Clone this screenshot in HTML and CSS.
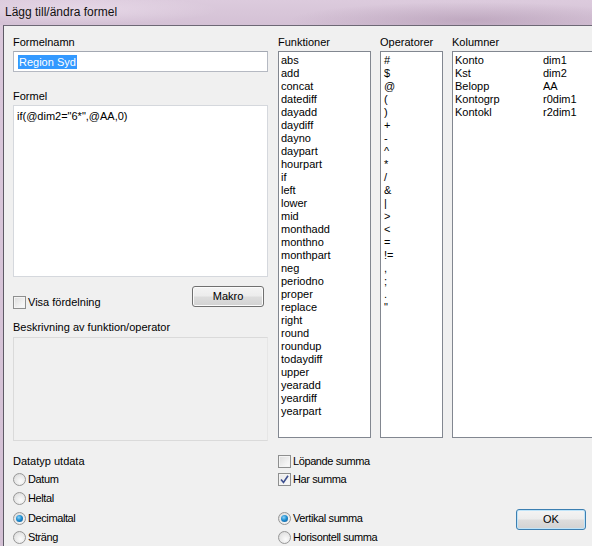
FILE: index.html
```html
<!DOCTYPE html>
<html>
<head>
<meta charset="utf-8">
<link rel="stylesheet" href="styles.css">
</head>
<body>
<div class="titlebar">Lägg till/ändra formel</div>
<div class="client">
  <div class="main">
    <div class="leftcol">
      <div class="label">Formelnamn</div>
      <div class="textbox"><span class="sel">Region Syd</span></div>
      <div class="label l-formel">Formel</div>
      <div class="textarea">if(@dim2="6*",@AA,0)</div>
      <div class="row-makro">
        <div class="check"><span class="cb"></span><span>Visa fördelning</span></div>
        <div class="btn makro">Makro</div>
      </div>
      <div class="label l-besk">Beskrivning av funktion/operator</div>
      <div class="descbox"></div>
    </div>
    <div class="listcol">
      <div class="label">Funktioner</div>
      <div class="list">
        <div>abs</div><div>add</div><div>concat</div><div>datediff</div><div>dayadd</div><div>daydiff</div><div>dayno</div><div>daypart</div><div>hourpart</div><div>if</div><div>left</div><div>lower</div><div>mid</div><div>monthadd</div><div>monthno</div><div>monthpart</div><div>neg</div><div>periodno</div><div>proper</div><div>replace</div><div>right</div><div>round</div><div>roundup</div><div>todaydiff</div><div>upper</div><div>yearadd</div><div>yeardiff</div><div>yearpart</div>
      </div>
    </div>
    <div class="listcol">
      <div class="label">Operatorer</div>
      <div class="list">
        <div>#</div><div>$</div><div>@</div><div>(</div><div>)</div><div>+</div><div>-</div><div>^</div><div>*</div><div>/</div><div>&amp;</div><div>|</div><div>&gt;</div><div>&lt;</div><div>=</div><div>!=</div><div>,</div><div>;</div><div>.</div><div>"</div>
      </div>
    </div>
    <div class="listcol">
      <div class="label">Kolumner</div>
      <div class="list cols">
        <div class="colrow"><span>Konto</span><span>dim1</span></div>
        <div class="colrow"><span>Kst</span><span>dim2</span></div>
        <div class="colrow"><span>Belopp</span><span>AA</span></div>
        <div class="colrow"><span>Kontogrp</span><span>r0dim1</span></div>
        <div class="colrow"><span>Kontokl</span><span>r2dim1</span></div>
      </div>
    </div>
  </div>
  <div class="bottom">
    <div class="c1 r1">Datatyp utdata</div>
    <div class="c1 r2 radio"><span class="rb"></span><span class="opt">Datum</span></div>
    <div class="c1 r3 radio"><span class="rb"></span><span class="opt">Heltal</span></div>
    <div class="c1 r4 radio"><span class="rb on"></span><span class="opt">Decimaltal</span></div>
    <div class="c1 r5 radio"><span class="rb"></span><span class="opt">Sträng</span></div>
    <div class="c2 r1 check"><span class="cb"></span><span class="opt">Löpande summa</span></div>
    <div class="c2 r2 check"><span class="cb on"><svg width="9" height="9" viewBox="0 0 9 9"><path d="M1 4.5 L3.5 7.5 L8 0.8" fill="none" stroke="#3d4f8f" stroke-width="1.6"/></svg></span><span class="opt">Har summa</span></div>
    <div class="c2 r4 radio"><span class="rb on"></span><span class="opt">Vertikal summa</span></div>
    <div class="c2 r5 radio"><span class="rb"></span><span class="opt">Horisontell summa</span></div>
    <div class="c3 okcell"><div class="btn ok">OK</div></div>
  </div>
</div>
</body>
</html>
```

FILE: styles.css
```css
html, body {
  margin: 0;
  padding: 0;
}
body {
  width: 592px;
  height: 546px;
  overflow: hidden;
  font-family: "Liberation Sans", Arial, sans-serif;
  font-size: 11px;
  color: #000;
  background: linear-gradient(180deg, #dac8db 0%, #d3c0d4 100%);
}
.titlebar {
  height: 25px;
  box-sizing: border-box;
  padding: 5px 0 0 5px;
  font-size: 12px;
  line-height: 15px;
  color: #111;
  background:
    radial-gradient(ellipse 180px 18px at 470px 20px, rgba(150,120,150,0.35), rgba(150,120,150,0) 100%),
    radial-gradient(ellipse 140px 14px at 80px 10px, rgba(255,245,255,0.35), rgba(255,255,255,0) 100%),
    linear-gradient(180deg, #dccbdd 0%, #d4c1d5 100%);
}
.client {
  margin-left: 3px;
  height: 521px;
  box-sizing: border-box;
  border-left: 1px solid #5e5a66;
  border-top: 1px solid #6d6875;
  background: #f0f0f0;
  padding: 10px 0 0 9px;
}
.main {
  display: grid;
  grid-template-columns: 255px 93px 62px 141px;
  column-gap: 10px;
  height: 401px;
}
.main .listcol:nth-child(3),
.main .listcol:nth-child(4) {
  margin-left: -1px;
}
.label {
  height: 15px;
  line-height: 13px;
}
.leftcol {
  display: flex;
  flex-direction: column;
}
.textbox {
  height: 21px;
  box-sizing: border-box;
  border: 1px solid #b5b9c2;
  border-top-color: #a3a8b2;
  background: #fff;
  padding: 3px 0 0 4px;
  line-height: 14px;
}
.sel {
  background: #3399ff;
  color: #fff;
  padding: 1px 1px;
}
.l-formel {
  margin-top: 18px;
}
.textarea {
  height: 172px;
  box-sizing: border-box;
  border: 1px solid #d5d8dd;
  background: #fff;
  padding: 4px 3px;
  line-height: 13px;
}
.row-makro {
  display: flex;
  justify-content: space-between;
  align-items: flex-start;
  margin-top: 9px;
  height: 35px;
  padding-right: 4px;
}
.row-makro .check {
  margin-top: 10px;
}
.check, .radio {
  display: flex;
  align-items: center;
  gap: 2px;
  line-height: 13px;
}
.opt {
  letter-spacing: -0.4px;
}
.cb {
  width: 13px;
  height: 13px;
  box-sizing: border-box;
  border: 1px solid #8e8f8f;
  background: linear-gradient(135deg, #dcdcdc 0%, #f4f4f4 70%, #fbfbfb 100%);
  box-shadow: inset 0 0 0 1px #f4f4f4;
  display: flex;
  align-items: center;
  justify-content: center;
  flex: none;
}
.cb.on {
  background: linear-gradient(135deg, #e8e8e8 0%, #fafafa 100%);
}
.rb {
  width: 13px;
  height: 13px;
  box-sizing: border-box;
  border-radius: 50%;
  border: 1px solid #979797;
  background: radial-gradient(circle at 60% 65%, #fbfbfb 0%, #e6e6e6 60%, #d0d0d0 100%);
  flex: none;
  position: relative;
}
.rb.on::after {
  content: "";
  position: absolute;
  left: 2px;
  top: 2px;
  width: 7px;
  height: 7px;
  border-radius: 50%;
  background: radial-gradient(circle at 40% 35%, #8fd2f7 0%, #1f8fd1 45%, #0b4f8f 100%);
}
.btn {
  box-sizing: border-box;
  border: 1px solid #707070;
  border-radius: 3px;
  background: linear-gradient(180deg, #f4f4f4 0%, #ececec 48%, #dddddd 52%, #d2d2d2 100%);
  box-shadow: inset 0 0 0 1px #fbfbfb;
  text-align: center;
  font-size: 11px;
}
.makro {
  width: 72px;
  height: 21px;
  line-height: 18px;
}
.l-besk {
  margin-top: 0;
}
.descbox {
  margin-top: 1px;
  height: 104px;
  box-sizing: border-box;
  border: 1px solid #dadada;
  border-right-color: #e6e6e6;
  background: #f0f0f0;
}
.listcol {
  display: flex;
  flex-direction: column;
}
.list {
  height: 387px;
  box-sizing: border-box;
  border: 1px solid #828790;
  background: #fff;
  padding: 2px 0 0 2px;
  line-height: 13px;
  white-space: nowrap;
}
.listcol:nth-child(3) .list {
  width: 63px;
  padding-left: 3px;
}
.listcol:nth-child(4) .list {
  width: 141px;
  border-right: none;
}
.colrow {
  display: grid;
  grid-template-columns: 88px auto;
}
.bottom {
  display: grid;
  grid-template-columns: 265px 238px 70px;
  grid-template-rows: 18px 19px 19px 20px 19px;
  margin-top: 15px;
}
.bottom > div {
  display: flex;
  align-items: center;
}
.c1 { grid-column: 1; }
.c2 { grid-column: 2; }
.r1 { grid-row: 1; }
.r2 { grid-row: 2; }
.r3 { grid-row: 3; }
.r4 { grid-row: 4; }
.r5 { grid-row: 5; }
.okcell {
  grid-column: 3;
  grid-row: 4 / 6;
  align-items: flex-start !important;
}
.ok {
  width: 70px;
  height: 21px;
  line-height: 18px;
  margin-top: 1px;
  border-color: #3c7fb1;
  box-shadow: inset 0 0 0 1px #bfe4f9;
}
```
